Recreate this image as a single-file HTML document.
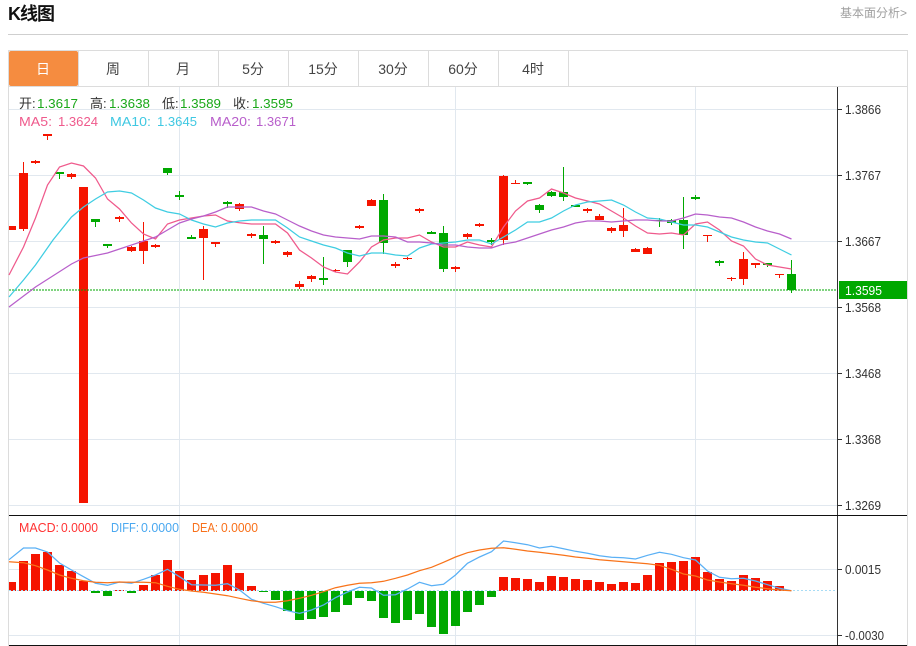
<!DOCTYPE html>
<html lang="zh"><head><meta charset="utf-8"><title>K线图</title>
<style>
html,body{margin:0;padding:0;background:#fff;width:916px;height:646px;overflow:hidden}
svg{display:block;font-family:"Liberation Sans","Noto Sans CJK SC",sans-serif}
</style></head><body>
<svg width="916" height="646" viewBox="0 0 916 646" xmlns="http://www.w3.org/2000/svg">
<text x="8" y="20" font-size="18" font-weight="700" fill="#111" textLength="47">K线图</text>
<text x="840" y="17" font-size="12" fill="#a0a0a0" textLength="67">基本面分析&gt;</text>
<path d="M8 34.5H908" stroke="#cfcfcf" fill="none"/>

<!-- frame -->
<g shape-rendering="crispEdges" fill="none" stroke="#dcdcdc">
<path d="M8.5 646V50.5H907.5V646"/>
<path d="M9 86.5H907"/>
<path d="M78.5 51V86M148.5 51V86M218.5 51V86M288.5 51V86M358.5 51V86M428.5 51V86M498.5 51V86M568.5 51V86"/>
</g>
<rect x="9" y="51" width="69" height="35" rx="2" fill="#f58c40"/>
<g font-size="14" fill="#444" text-anchor="middle">
<text x="43" y="74" fill="#fff">日</text>
<text x="113" y="74">周</text>
<text x="183" y="74">月</text>
<text x="253" y="74">5分</text>
<text x="323" y="74">15分</text>
<text x="393" y="74">30分</text>
<text x="463" y="74">60分</text>
<text x="533" y="74">4时</text>
</g>

<!-- grid -->
<g shape-rendering="crispEdges" fill="none" stroke="#e1e8ef">
<path d="M9 109.5H837M9 175.5H837M9 241.5H837M9 307.5H837M9 373.5H837M9 439.5H837M9 505.5H837M9 569.5H837M9 635.5H837"/>
<path d="M179.5 87V645M455.5 87V645M695.5 87V645"/>
</g>

<!-- green candles -->
<path fill="#00a800" shape-rendering="crispEdges" d="M55 172h9v2h-9zM91 219h9v3h-9zM103 244h9v2h-9zM163 168h9v5h-9zM175 195h9v2h-9zM187 237h9v2h-9zM223 202h9v2h-9zM259 235h9v4h-9zM319 278h9v2h-9zM343 250h9v12h-9zM379 200h9v43h-9zM427 232h9v2h-9zM439 233h9v36h-9zM487 240h9v2h-9zM523 182h9v2h-9zM535 205h9v5h-9zM547 192h9v4h-9zM559 192h9v5h-9zM571 205h9v2h-9zM655 220h9v1h-9zM667 220h9v3h-9zM679 220h9v15h-9zM691 197h9v2h-9zM715 261h9v2h-9zM763 263h9v2h-9zM787 274h9v16h-9z"/>
<path fill="none" stroke="#00a800" shape-rendering="crispEdges" d="M59.5 172V179M95.5 219V227M107.5 244V248M167.5 168V175M179.5 191V200M191.5 235V239M227.5 201V208M263.5 226V264M323.5 257V285M347.5 250V267M383.5 194V254M431.5 231V234M443.5 226V272M491.5 238V245M527.5 182V185M539.5 204V213M551.5 191V197M563.5 167V201M575.5 205V207M659.5 218V227M671.5 219V225M683.5 197V249M695.5 195V200M719.5 260V266M767.5 263V267M791.5 260V293"/>

<!-- red candles -->
<path fill="#f51400" shape-rendering="crispEdges" d="M9 226h7v4h-7zM19 173h9v56h-9zM31 161h9v2h-9zM43 134h9v2h-9zM67 174h9v3h-9zM79 187h9v316h-9zM115 217h9v2h-9zM127 247h9v4h-9zM139 241h9v10h-9zM151 245h9v2h-9zM199 229h9v9h-9zM211 242h9v2h-9zM235 204h9v5h-9zM247 234h9v2h-9zM271 241h9v2h-9zM283 252h9v3h-9zM295 284h9v3h-9zM307 276h9v3h-9zM331 270h9v1h-9zM355 226h9v2h-9zM367 200h9v6h-9zM391 264h9v2h-9zM403 258h9v1h-9zM415 209h9v2h-9zM451 267h9v2h-9zM463 234h9v3h-9zM475 224h9v2h-9zM499 176h9v64h-9zM511 183h9v1h-9zM583 209h9v2h-9zM595 216h9v4h-9zM607 228h9v3h-9zM619 225h9v6h-9zM631 249h9v3h-9zM643 248h9v6h-9zM703 235h9v1h-9zM727 278h9v1h-9zM739 259h9v20h-9zM751 263h9v2h-9zM775 274h9v1h-9z"/>
<path fill="none" stroke="#f51400" shape-rendering="crispEdges" d="M23.5 162V231M35.5 160V164M47.5 134V140M71.5 173V179M119.5 216V222M131.5 246V252M143.5 222V264M155.5 244V248M203.5 226V280M215.5 242V247M239.5 203V211M251.5 233V238M275.5 240V244M287.5 251V257M299.5 281V289M311.5 275V282M335.5 269V272M359.5 225V229M371.5 199V206M395.5 262V268M407.5 257V260M419.5 208V213M455.5 266V272M467.5 233V239M479.5 223V227M503.5 175V245M515.5 180V184M587.5 208V213M599.5 214V220M611.5 227V233M623.5 208V237M635.5 248V252M647.5 247V254M707.5 235V242M731.5 277V281M743.5 252V285M755.5 263V268M779.5 274V278"/>

<!-- last price dotted -->
<path d="M9 290H837" stroke="#00a800" stroke-opacity=".5" stroke-width="2" stroke-dasharray="2 1" fill="none"/>

<!-- MA lines -->
<polyline fill="none" stroke="#ef5a8c" stroke-width="1.25" points="9,275 23.5,247 35.5,218 47.5,185 59.5,167 71.5,163 83.5,166 95.5,178 107.5,199 119.5,209 131.5,223 143.5,234 155.5,239 167.5,224 179.5,220 191.5,218 203.5,216 215.5,215 227.5,221 239.5,222.7 251.5,224 263.5,224 275.5,224 287.5,233 299.5,250 311.5,258 323.5,267 335.5,272 347.5,274 359.5,262 371.5,247 383.5,240 395.5,238 407.5,238 419.5,235 431.5,242 443.5,247 455.5,247 467.5,242 479.5,245 491.5,247 503.5,227 515.5,211 527.5,201 539.5,198 551.5,189 563.5,193 575.5,198 587.5,201 599.5,204 611.5,211 623.5,218 635.5,226 647.5,233 659.5,234 671.5,233 683.5,235 695.5,224 707.5,222 719.5,230 731.5,241 743.5,246 755.5,259 767.5,265 779.5,267 791.5,269"/>
<polyline fill="none" stroke="#3fcde2" stroke-width="1.25" points="9,297 23.5,280 35.5,265 53,240 71.5,217 83.5,207 95.5,199 107.5,192 119.5,191 131.5,193 143.5,200 155.5,208 167.5,212 179.5,214 191.5,220 203.5,224 215.5,227 227.5,223 239.5,221 251.5,220 263.5,220 275.5,220 287.5,228 299.5,237 311.5,241 323.5,245 335.5,248 347.5,253 359.5,256 371.5,253 383.5,253 395.5,255 407.5,256 419.5,248 431.5,244 443.5,243 455.5,242 467.5,240 479.5,240 491.5,244 503.5,237 515.5,230 527.5,222 539.5,222 551.5,218 563.5,211 575.5,205 587.5,202 599.5,201 611.5,200 623.5,205 635.5,212 647.5,218 659.5,219 671.5,222 683.5,225 695.5,225 707.5,227 719.5,232 731.5,237 743.5,240 755.5,242 767.5,243 779.5,249 791.5,255"/>
<polyline fill="none" stroke="#b85fcb" stroke-width="1.25" points="9,307 35.5,287 71.5,264 83.5,258 107.5,253 143.5,241 155.5,237 167.5,230 179.5,223 191.5,219 203.5,216 215.5,212 227.5,207 239.5,207 251.5,207 263.5,211 275.5,214 287.5,220 299.5,226 311.5,231 323.5,235 335.5,237 347.5,238 359.5,239 371.5,236 383.5,236 395.5,237 407.5,242 419.5,242 431.5,243 443.5,245 455.5,245 467.5,247 479.5,248 491.5,248 503.5,244 515.5,242 527.5,238 539.5,234 551.5,230 563.5,227 575.5,223 587.5,221 599.5,221 611.5,222 623.5,221 635.5,220 647.5,220 659.5,221 671.5,221 683.5,218 695.5,214 707.5,215 719.5,217 731.5,218 743.5,222 755.5,227 767.5,231 779.5,234 791.5,239"/>

<!-- MACD bars -->
<path fill="#f51400" shape-rendering="crispEdges" d="M9 582h7V591h-7zM19 561h9V591h-9zM31 554h9V591h-9zM43 552h9V591h-9zM55 565h9V591h-9zM67 571h9V591h-9zM79 581h9V591h-9zM115 590h9V591h-9zM139 585h9V591h-9zM151 575h9V591h-9zM163 560h9V591h-9zM175 571h9V591h-9zM187 580h9V591h-9zM199 575h9V591h-9zM211 573h9V591h-9zM223 565h9V591h-9zM235 573h9V591h-9zM247 586h9V591h-9zM499 577h9V591h-9zM511 578h9V591h-9zM523 579h9V591h-9zM535 582h9V591h-9zM547 576h9V591h-9zM559 577h9V591h-9zM571 579h9V591h-9zM583 580h9V591h-9zM595 582h9V591h-9zM607 584h9V591h-9zM619 582h9V591h-9zM631 583h9V591h-9zM643 575h9V591h-9zM655 563h9V591h-9zM667 562h9V591h-9zM679 561h9V591h-9zM691 557h9V591h-9zM703 572h9V591h-9zM715 579h9V591h-9zM727 581h9V591h-9zM739 575h9V591h-9zM751 578h9V591h-9zM763 581h9V591h-9zM775 586h9V591h-9z"/>
<path fill="#00a800" shape-rendering="crispEdges" d="M91 591h9V593h-9zM103 591h9V596h-9zM127 591h9V593h-9zM259 591h9V592h-9zM271 591h9V600h-9zM283 591h9V611h-9zM295 591h9V620h-9zM307 591h9V619h-9zM319 591h9V617h-9zM331 591h9V612h-9zM343 591h9V605h-9zM355 591h9V598h-9zM367 591h9V601h-9zM379 591h9V618h-9zM391 591h9V623h-9zM403 591h9V620h-9zM415 591h9V614h-9zM427 591h9V627h-9zM439 591h9V634h-9zM451 591h9V626h-9zM463 591h9V612h-9zM475 591h9V605h-9zM487 591h9V597h-9z"/>
<path d="M9 590.5H835" stroke="#a8dcf5" stroke-dasharray="2 2" fill="none" shape-rendering="crispEdges"/>

<!-- DIFF / DEA -->
<polyline fill="none" stroke="#5ab0f5" stroke-width="1.25" points="9,559.7 23.5,548 35.5,548 47.5,552 59.5,563 71.5,570 83.5,576.7 95.5,583.3 107.5,585.3 119.5,582 131.5,583.3 143.5,579.3 155.5,575 167.5,569.3 179.5,576.7 191.5,584.7 203.5,585 215.5,585.3 227.5,583.7 239.5,590 251.5,599.3 263.5,603.3 275.5,606.7 287.5,610.7 299.5,613.3 311.5,610 323.5,605 335.5,597.7 347.5,592 359.5,587.3 371.5,588 383.5,595.3 395.5,594.7 407.5,589 419.5,582.3 431.5,585.7 443.5,584.3 455.5,575 467.5,563.3 479.5,557 491.5,551.7 503.5,541 515.5,542.7 527.5,544.7 539.5,548 551.5,546.3 563.5,548.7 575.5,551.3 587.5,553.3 599.5,555.7 611.5,557.3 623.5,557.7 635.5,559 647.5,555.3 659.5,552.3 671.5,554.3 683.5,557.7 695.5,560 707.5,571 719.5,577.3 731.5,578.7 743.5,578.3 755.5,581 767.5,584.7 779.5,588.3 791.5,590.7"/>
<polyline fill="none" stroke="#f8731a" stroke-width="1.25" points="9,561.7 23.5,562.7 35.5,565.7 47.5,570 59.5,575 71.5,578.3 83.5,580.7 95.5,582.3 107.5,582.7 119.5,582 131.5,582.3 143.5,582.3 155.5,582.7 167.5,586.3 179.5,589.3 191.5,591 203.5,592.3 215.5,594 227.5,595.7 239.5,598.3 251.5,600.7 263.5,602.3 275.5,602.3 287.5,600.7 299.5,598.3 311.5,595.3 323.5,591.7 335.5,587.7 347.5,585.3 359.5,583.3 371.5,582.7 383.5,581.3 395.5,578.3 407.5,575 419.5,570.7 431.5,567.3 443.5,562.3 455.5,557 467.5,552.7 479.5,550 491.5,548.3 503.5,547.7 515.5,549.3 527.5,551 539.5,552.3 551.5,553.7 563.5,555.3 575.5,557 587.5,558.3 599.5,559.7 611.5,560.7 623.5,561.7 635.5,562.7 647.5,563.7 659.5,565.3 671.5,569.3 683.5,574 695.5,576 707.5,580 719.5,582 731.5,583.7 743.5,585.3 755.5,587.3 767.5,588.7 779.5,590 791.5,590.7"/>

<!-- axes -->
<g shape-rendering="crispEdges" fill="none">
<path d="M837.5 87V646" stroke="#333"/>
<path d="M9 515.5H907M9 645.5H907" stroke="#111"/>
<path d="M838 109.5H842M838 175.5H842M838 241.5H842M838 307.5H842M838 373.5H842M838 439.5H842M838 505.5H842M838 569.5H842M838 635.5H842" stroke="#333"/>
</g>
<rect x="839" y="281" width="68" height="18" fill="#00a800"/>
<g font-size="13" fill="#333">
<text x="845" y="114" textLength="36" lengthAdjust="spacingAndGlyphs">1.3866</text>
<text x="845" y="180" textLength="36" lengthAdjust="spacingAndGlyphs">1.3767</text>
<text x="845" y="246" textLength="36" lengthAdjust="spacingAndGlyphs">1.3667</text>
<text x="845" y="312" textLength="36" lengthAdjust="spacingAndGlyphs">1.3568</text>
<text x="845" y="378" textLength="36" lengthAdjust="spacingAndGlyphs">1.3468</text>
<text x="845" y="444" textLength="36" lengthAdjust="spacingAndGlyphs">1.3368</text>
<text x="845" y="510" textLength="36" lengthAdjust="spacingAndGlyphs">1.3269</text>
<text x="845" y="574" textLength="36" lengthAdjust="spacingAndGlyphs">0.0015</text>
<text x="845" y="640" textLength="39" lengthAdjust="spacingAndGlyphs">-0.0030</text>
<text x="845" y="295" fill="#fff" textLength="37" lengthAdjust="spacingAndGlyphs">1.3595</text>
</g>

<!-- legends -->
<g font-size="13">
<text x="19" y="108" fill="#333">开:</text><text x="37" y="108" fill="#1aa81a" textLength="41" lengthAdjust="spacingAndGlyphs">1.3617</text>
<text x="90" y="108" fill="#333">高:</text><text x="109" y="108" fill="#1aa81a" textLength="41" lengthAdjust="spacingAndGlyphs">1.3638</text>
<text x="162" y="108" fill="#333">低:</text><text x="180" y="108" fill="#1aa81a" textLength="41" lengthAdjust="spacingAndGlyphs">1.3589</text>
<text x="233" y="108" fill="#333">收:</text><text x="252" y="108" fill="#1aa81a" textLength="41" lengthAdjust="spacingAndGlyphs">1.3595</text>
<text x="19" y="126" fill="#ef5a8c" textLength="33" lengthAdjust="spacingAndGlyphs">MA5:</text><text x="58" y="126" fill="#ef5a8c" textLength="40" lengthAdjust="spacingAndGlyphs">1.3624</text>
<text x="110" y="126" fill="#3fc8e2" textLength="41" lengthAdjust="spacingAndGlyphs">MA10:</text><text x="157" y="126" fill="#3fc8e2" textLength="40" lengthAdjust="spacingAndGlyphs">1.3645</text>
<text x="210" y="126" fill="#b85fcb" textLength="41" lengthAdjust="spacingAndGlyphs">MA20:</text><text x="256" y="126" fill="#b85fcb" textLength="40" lengthAdjust="spacingAndGlyphs">1.3671</text>
</g>
<g font-size="13">
<text x="19" y="532" fill="#f33" textLength="40" lengthAdjust="spacingAndGlyphs">MACD:</text><text x="61" y="532" fill="#f33" textLength="37" lengthAdjust="spacingAndGlyphs">0.0000</text>
<text x="111" y="532" fill="#4aa8f0" textLength="28" lengthAdjust="spacingAndGlyphs">DIFF:</text><text x="141" y="532" fill="#4aa8f0" textLength="38" lengthAdjust="spacingAndGlyphs">0.0000</text>
<text x="192" y="532" fill="#f8701a" textLength="26" lengthAdjust="spacingAndGlyphs">DEA:</text><text x="221" y="532" fill="#f8701a" textLength="37" lengthAdjust="spacingAndGlyphs">0.0000</text>
</g>
</svg>
</body></html>
